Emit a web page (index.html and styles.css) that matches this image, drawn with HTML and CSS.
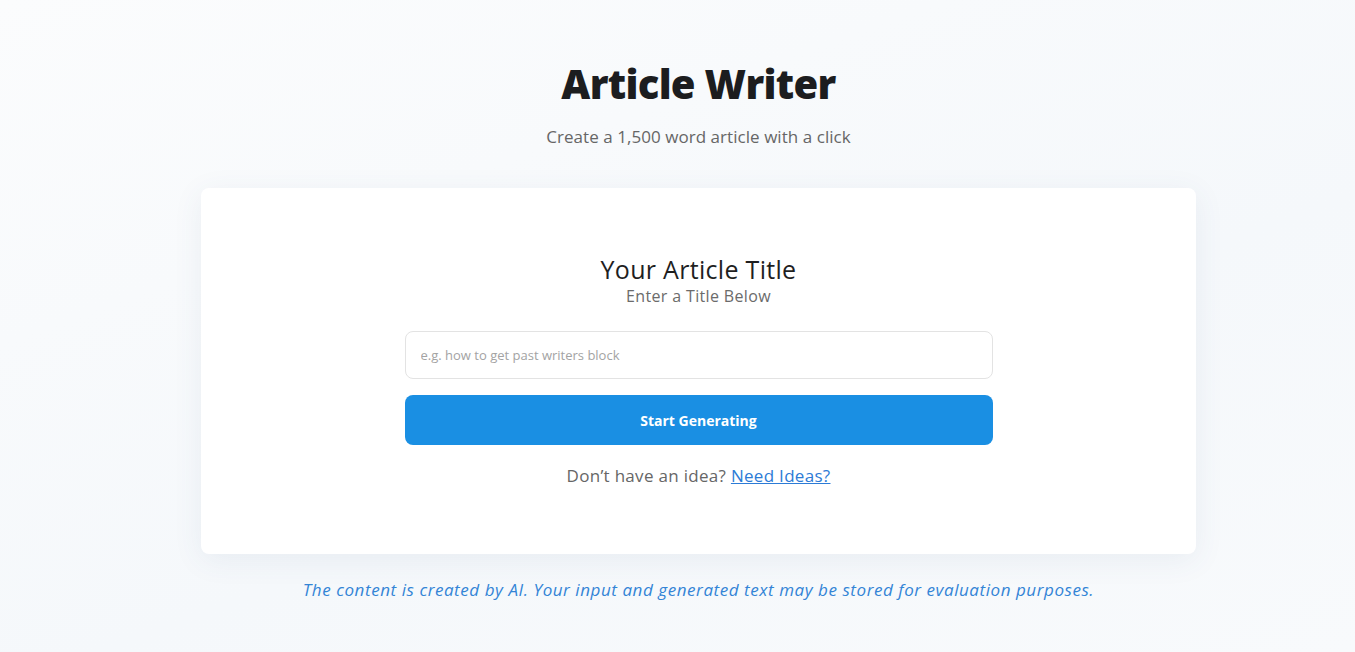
FILE: index.html
```html
<!DOCTYPE html>
<html lang="en">
  <head>
    <meta charset="UTF-8" />
    <meta name="viewport" content="width=device-width, initial-scale=1.0" />
    <title>Article Writer</title>
    <link rel="stylesheet" href="styles.css">
  </head>
  <body>
    <div class="page">
      <header class="header">
        <h1>Article Writer</h1>
        <p class="subtitle">Create a 1,500 word article with a click</p>
      </header>

      <div class="card">
        <div class="form">
          <h2>Your Article Title</h2>
          <p class="hint">Enter a Title Below</p>
          <input type="text" id="title-input" placeholder="e.g. how to get past writers block" />
          <button id="generate-btn">Start Generating</button>
          <p class="ideas">Don’t have an idea? <a href="#">Need Ideas?</a></p>
        </div>
      </div>

      <p class="notice">The content is created by AI. Your input and generated text may be stored for evaluation purposes.</p>
    </div>
  </body>
</html>
```

FILE: styles.css
```css
body {
  font-family: "Open Sans", Arial, sans-serif;
  background: linear-gradient(160deg, #fbfcfd 0%, #f5f8fb 60%, #f8fafc 100%);
  margin: 0;
  padding: 0 0 0 42px;
  min-height: 652px;
}

.page {
  width: 995px;
  margin: 0 auto;
  padding-top: 60px;
}

.header {
  text-align: center;
}

h1 {
  font-size: 40px;
  line-height: 48px;
  font-weight: 800;
  letter-spacing: -0.7px;
  color: #1c1d1f;
  margin: 0;
}

.subtitle {
  font-size: 17px;
  line-height: 24px;
  letter-spacing: 0.05px;
  color: #666;
  margin: 17px 0 0;
}

.card {
  margin-top: 39px;
  background-color: #fff;
  border-radius: 8px;
  box-shadow: 0 6px 30px rgba(60, 90, 130, 0.08);
  padding: 65px 0 66px;
}

.form {
  width: 588px;
  margin: 0 auto;
  display: flex;
  flex-direction: column;
  align-items: center;
}

h2 {
  font-size: 25px;
  line-height: 32px;
  font-weight: 500;
  letter-spacing: 0.3px;
  color: #1f1f1f;
  margin: 0;
}

.hint {
  font-size: 16px;
  line-height: 24px;
  letter-spacing: 0.35px;
  color: #6b6b6b;
  margin: -1px 0 0;
}

input[type="text"] {
  box-sizing: border-box;
  width: 100%;
  height: 48px;
  margin-top: 23px;
  padding: 0 15px;
  font-family: inherit;
  font-size: 13px;
  border: 1px solid #e3e3e3;
  border-radius: 8px;
  outline: none;
}

input::placeholder {
  color: #a3a3a3;
}

button {
  width: 100%;
  height: 50px;
  margin-top: 16px;
  background-color: #1a8fe3;
  color: #fff;
  border: none;
  border-radius: 8px;
  font-family: inherit;
  font-size: 14px;
  font-weight: 700;
  cursor: pointer;
}

.ideas {
  font-size: 17px;
  line-height: 24px;
  letter-spacing: 0.3px;
  color: #666;
  margin: 19px 0 0;
}

.ideas a {
  color: #2c7bd6;
}

.notice {
  text-align: center;
  font-size: 17px;
  line-height: 24px;
  letter-spacing: 0.56px;
  font-style: italic;
  color: #3384d6;
  margin: 24px 0 0;
}
```
